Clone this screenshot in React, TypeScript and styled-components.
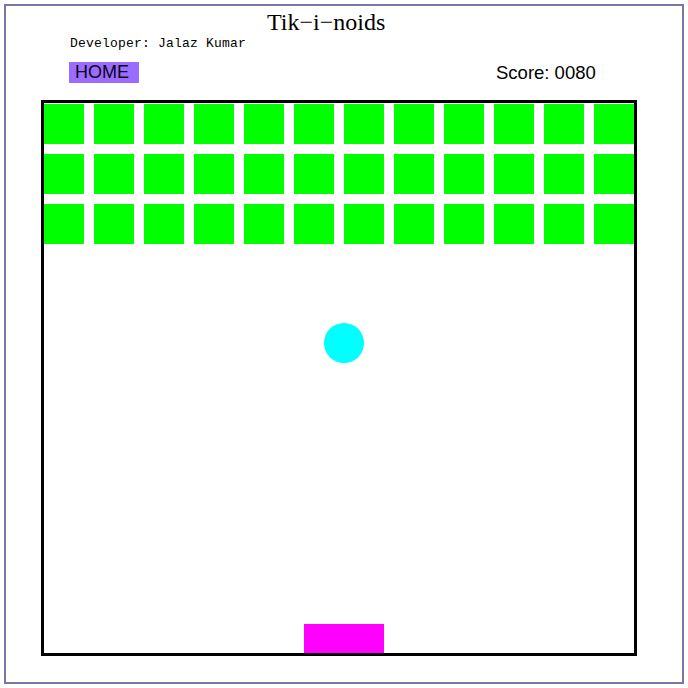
import React from "react";
import styled, { createGlobalStyle } from "styled-components";

const Global = createGlobalStyle`
  html, body { margin: 0; padding: 0; background: #ffffff; }
  * { box-sizing: border-box; }
`;

const Frame = styled.div`
  margin: 4px;
  width: 680px;
  height: 680px;
  border: 2px solid #7777aa;
  background: #ffffff;
  display: flex;
  flex-direction: column;
`;

const Title = styled.h1`
  margin: 4px 0 0 261px;
  font-family: "Liberation Serif", "Times New Roman", serif;
  font-weight: normal;
  font-size: 24px;
  line-height: 24px;
  color: #000000;
`;

const Developer = styled.div`
  margin: 2px 0 0 64px;
  font-family: "Liberation Mono", "Courier New", monospace;
  font-size: 13px;
  letter-spacing: 0.2px;
  line-height: 15px;
  color: #000000;
`;

const TopBar = styled.div`
  margin: 11px 0 0 63px;
  display: flex;
  align-items: center;
  gap: 357px;
`;

const HomeButton = styled.button`
  width: 70px;
  height: 21px;
  padding: 0 0 0 6px;
  border: none;
  background: #9a6cff;
  color: #0a0420;
  font-family: "Liberation Sans", Arial, sans-serif;
  font-size: 18px;
  line-height: 21px;
  text-align: left;
  cursor: pointer;
`;

const Score = styled.div`
  font-family: "Liberation Sans", Arial, sans-serif;
  font-size: 18.5px;
  line-height: 21px;
  color: #000000;
`;

const Board = styled.div`
  position: relative;
  margin: 17px 0 0 35px;
  width: 596px;
  height: 556px;
  border: 3px solid #000000;
  overflow: hidden;
`;

const BrickGrid = styled.div`
  padding-top: 1px;
  display: grid;
  grid-template-columns: repeat(12, 40px);
  grid-auto-rows: 40px;
  gap: 10px;
`;

const Brick = styled.div`
  background: #00ff00;
`;

const Ball = styled.div`
  position: absolute;
  width: 40px;
  height: 40px;
  border-radius: 50%;
  background: #00ffff;
`;

const Paddle = styled.div`
  position: absolute;
  width: 80px;
  height: 30px;
  background: #ff00ff;
`;

export default function App() {
  const bricks = Array.from({ length: 36 }, (_, i) => i);
  return (
    <>
      <Global />
      <Frame>
        <Title>Tik−i−noids</Title>
        <Developer>Developer: Jalaz Kumar</Developer>
        <TopBar>
          <HomeButton>HOME</HomeButton>
          <Score>Score: 0080</Score>
        </TopBar>
        <Board>
          <BrickGrid>
            {bricks.map((b) => (
              <Brick key={b} />
            ))}
          </BrickGrid>
          <Ball style={{ left: 280, top: 220 }} />
          <Paddle style={{ left: 260, top: 521 }} />
        </Board>
      </Frame>
    </>
  );
}
